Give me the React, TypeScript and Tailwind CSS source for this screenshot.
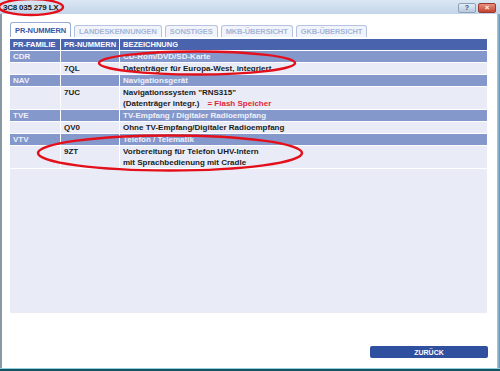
import React from "react";

interface Row {
  kind: "group" | "item";
  fam?: string;
  nr?: string;
  lines: string[];
  note?: string;
}

const rows: Row[] = [
  { kind: "group", fam: "CDR", lines: ["CD-Rom/DVD/SD-Karte"] },
  { kind: "item", nr: "7QL", lines: ["Datenträger für Europa-West, integriert"] },
  { kind: "group", fam: "NAV", lines: ["Navigationsgerät"] },
  {
    kind: "item",
    nr: "7UC",
    lines: ['Navigationssystem "RNS315"', "(Datenträger integr.)"],
    note: "= Flash Speicher",
  },
  { kind: "group", fam: "TVE", lines: ["TV-Empfang / Digitaler Radioempfang"] },
  { kind: "item", nr: "QV0", lines: ["Ohne TV-Empfang/Digitaler Radioempfang"] },
  { kind: "group", fam: "VTV", lines: ["Telefon / Telematik"] },
  {
    kind: "item",
    nr: "9ZT",
    lines: ["Vorbereitung für Telefon UHV-Intern", "mit Sprachbedienung mit Cradle"],
  },
];

const tabs = ["LANDESKENNUNGEN", "SONSTIGES", "MKB-ÜBERSICHT", "GKB-ÜBERSICHT"];

const App = () => {
  return (
    <div
      className="relative w-[500px] h-[371px] overflow-hidden flex flex-col bg-white text-[8px] leading-[11px] whitespace-nowrap"
      style={{ fontFamily: '"Liberation Sans", Arial, sans-serif' }}
    >
      {/* title bar */}
      <div className="h-[14px] flex items-center justify-between pl-[3px] pr-[4px] bg-gradient-to-b from-[#dbe7f3] to-[#c3d5e9]">
        <span className="text-[#1a1a1a] text-[8px] font-bold tracking-[-0.2px]">3C8 035 279 LX</span>
        <div className="flex gap-[2px] mt-[1px]">
          <div className="w-[18px] h-[10px] rounded-[2px] border border-[#8ea3bb] bg-gradient-to-b from-[#e4edf6] to-[#b7c9de] flex items-center justify-center text-[7px] leading-none text-[#39506b] font-bold">
            ?
          </div>
          <div className="w-[18px] h-[10px] rounded-[2px] border border-[#9a3a30] bg-gradient-to-b from-[#e8907e] to-[#c2412f] flex items-center justify-center text-[8px] leading-none text-white font-bold">
            ×
          </div>
        </div>
      </div>

      {/* body */}
      <div className="flex-1 flex border-l-2 border-[#8a98a4]">
        <div className="flex-1 flex flex-col pl-[8px] pr-[8px] pt-[8px]">
          {/* tabs */}
          <div className="flex items-end gap-[3px] h-[15px] text-[7.5px] tracking-[-0.1px]">
            <div className="h-[15px] px-[4px] flex items-center border border-b-0 border-[#98abd3] rounded-t-[3px] bg-white text-[#3a56a3] font-bold">
              PR-NUMMERN
            </div>
            {tabs.map((t) => (
              <div
                key={t}
                className="h-[12px] px-[4px] flex items-center border border-b-0 border-[#b5c3e0] rounded-t-[3px] bg-[#f1f4fa] text-[#a6b4d6] font-bold"
              >
                {t}
              </div>
            ))}
          </div>

          {/* table */}
          <div className="mt-[2px] mr-[2px] flex flex-col gap-px bg-white">
            <div className="grid grid-cols-[50px_58px_1fr] gap-x-px h-[11px] text-white font-bold text-[7.5px]">
              <div className="bg-[#4a63ad] pl-[3px]">PR-FAMILIE</div>
              <div className="bg-[#4a63ad] pl-[3px]">PR-NUMMERN</div>
              <div className="bg-[#4a63ad] pl-[3px]">BEZEICHNUNG</div>
            </div>
            {rows.map((r, i) =>
              r.kind === "group" ? (
                <div key={i} className="grid grid-cols-[50px_58px_1fr] gap-x-px h-[11px] text-[#eef1f9] font-bold">
                  <div className="bg-[#8598cc] pl-[3px]">{r.fam}</div>
                  <div className="bg-[#8598cc]" />
                  <div className="bg-[#8598cc] pl-[3px]">{r.lines[0]}</div>
                </div>
              ) : (
                <div key={i} className="grid grid-cols-[50px_58px_1fr] gap-x-px text-[#1b1b1b] font-bold">
                  <div className="bg-[#e9ecf6]" />
                  <div className="bg-[#e9ecf6] pl-[3px]">{r.nr}</div>
                  <div className="bg-[#e9ecf6] pl-[3px] flex flex-col">
                    {r.lines.map((l, j) => (
                      <div key={j} className="h-[11px] flex">
                        <span>{l}</span>
                        {r.note && j === r.lines.length - 1 && (
                          <span className="ml-[8px] text-[#e32436]">{r.note}</span>
                        )}
                      </div>
                    ))}
                  </div>
                </div>
              )
            )}
            <div className="h-[144px] bg-[#e9ecf6]" />
          </div>

          {/* bottom button */}
          <div className="flex justify-end mt-[33px] mr-[1px]">
            <div className="w-[118px] h-[12px] rounded-[2px] bg-[#2f4f9f] text-white font-bold text-[7px] flex items-center justify-center">
              ZURÜCK
            </div>
          </div>
        </div>
        <div className="w-[3px] bg-gradient-to-r from-[#a8cde4] to-[#5d93b7]" />
      </div>
      <div className="h-[1px] bg-[#8fd0e0]" />
      <div className="h-[2px] bg-[#145463]" />

      {/* red annotation ellipses */}
      <svg className="absolute left-0 top-0 pointer-events-none" width="500" height="371">
        <g fill="none" stroke="#e3101c" strokeWidth="2.5">
          <ellipse cx="31" cy="7" rx="32" ry="8" />
          <ellipse cx="197" cy="63" rx="98" ry="11.5" />
          <ellipse cx="170" cy="153" rx="132" ry="17.5" />
        </g>
      </svg>
    </div>
  );
};

export default App;
